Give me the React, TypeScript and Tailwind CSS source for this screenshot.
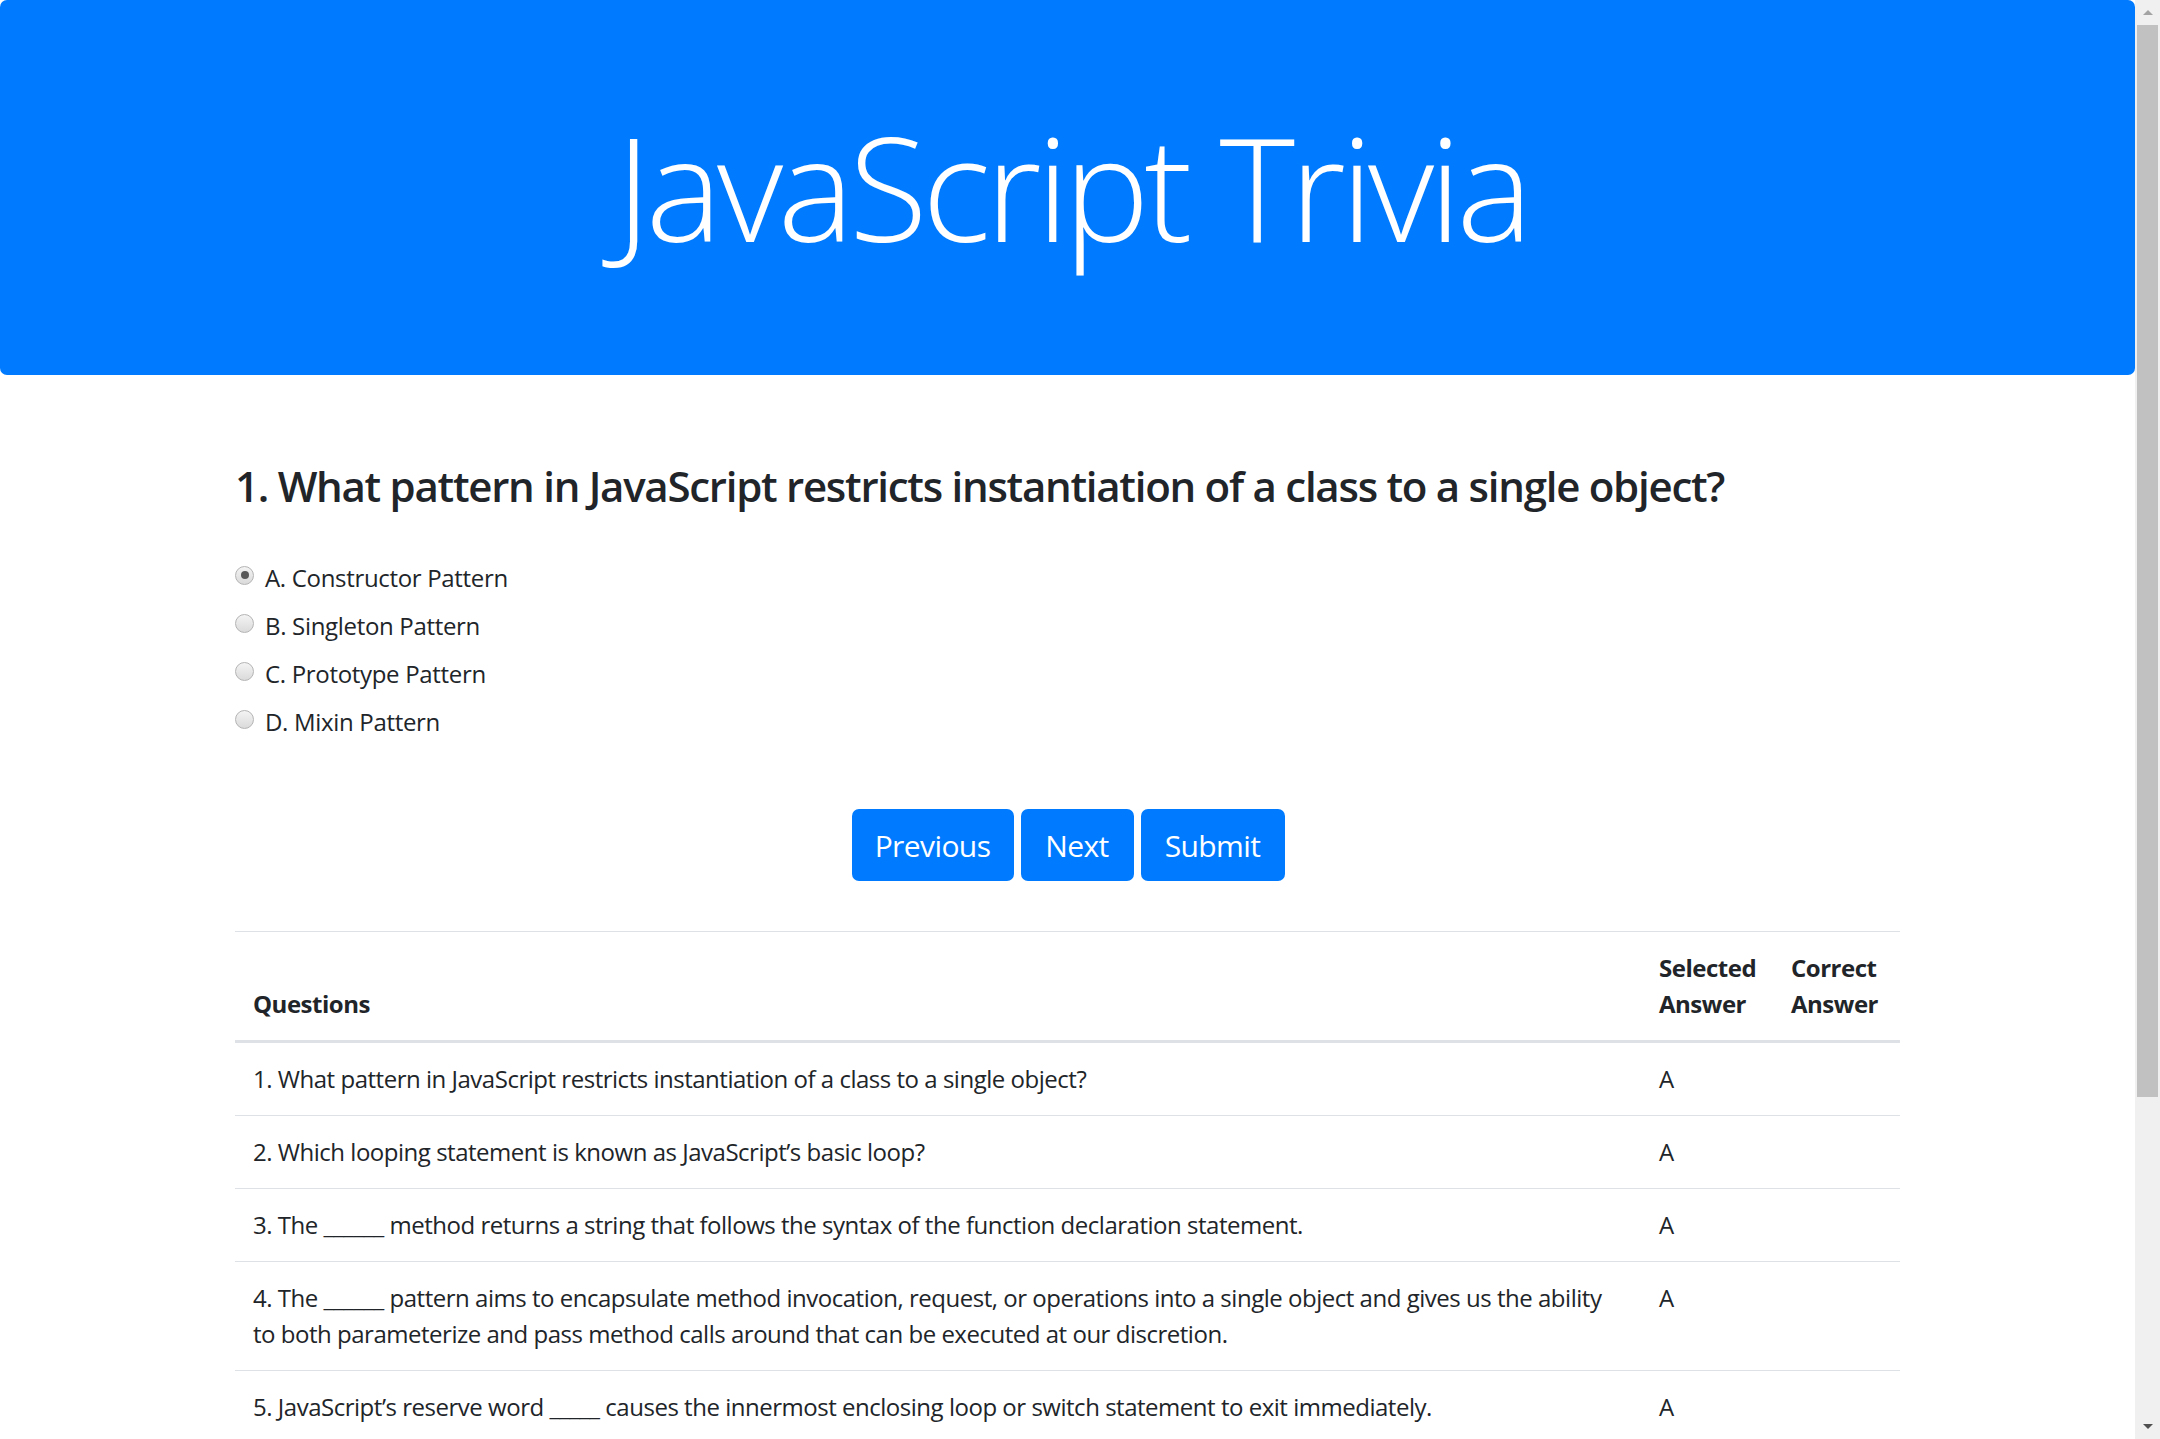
import { useState } from "react";

const font = "font-['Open_Sans',sans-serif]";

const options = [
  "A. Constructor Pattern",
  "B. Singleton Pattern",
  "C. Prototype Pattern",
  "D. Mixin Pattern",
];

const rows = [
  { q: "1. What pattern in JavaScript restricts instantiation of a class to a single object?", sel: "A", ok: "" },
  { q: "2. Which looping statement is known as JavaScript’s basic loop?", sel: "A", ok: "" },
  { q: "3. The ______ method returns a string that follows the syntax of the function declaration statement.", sel: "A", ok: "" },
  {
    q: "4. The ______ pattern aims to encapsulate method invocation, request, or operations into a single object and gives us the ability to both parameterize and pass method calls around that can be executed at our discretion.",
    sel: "A",
    ok: "",
  },
  { q: "5. JavaScript’s reserve word _____ causes the innermost enclosing loop or switch statement to exit immediately.", sel: "A", ok: "" },
];

function Radio({ checked }: { checked: boolean }) {
  return (
    <span className="flex h-[19px] w-[19px] shrink-0 items-center justify-center rounded-full border border-[#b4b4b4] bg-[linear-gradient(#f4f4f4,#dadada)]">
      {checked && <span className="h-[8px] w-[8px] rounded-full bg-[#5a5a5a]" />}
    </span>
  );
}

function Scrollbar() {
  return (
    <div className="flex h-full w-[25px] shrink-0 flex-col bg-[#f0f0f0]">
      <div className="flex h-[25px] items-center justify-center">
        <span className="h-0 w-0 border-x-[5px] border-b-[5px] border-x-transparent border-b-[#a3a3a3]" />
      </div>
      <div className="ml-[2px] mr-[2px] h-[1072px] bg-[#c1c1c1]" />
      <div className="flex-1" />
      <div className="flex h-[25px] items-center justify-center">
        <span className="h-0 w-0 border-x-[5px] border-t-[5px] border-x-transparent border-t-[#505050]" />
      </div>
    </div>
  );
}

export default function App() {
  const [answer, setAnswer] = useState(0);

  return (
    <div className={`flex h-[1439px] w-full overflow-hidden bg-white text-[#212529] ${font}`}>
      <div className="min-w-0 flex-1">
        {/* jumbotron */}
        <div className="h-[375px] rounded-[7px] bg-[#007bff] pt-[100px] text-center">
          <h1 className="pl-[8px] text-[144px] font-light leading-[1.2] tracking-[-0.036em] text-white">JavaScript Trivia</h1>
        </div>

        <div className="mx-auto w-[1665px] pt-[86px]">
          <h3 className="text-[42px] font-semibold leading-[1.2] tracking-[-0.03em]">
            1. What pattern in JavaScript restricts instantiation of a class to a single object?
          </h3>

          <div className="mt-[49px] flex flex-col gap-[12px] tracking-[-0.02em]">
            {options.map((o, i) => (
              <label key={o} className="flex cursor-pointer items-center gap-[11px] text-[24px] leading-[36px]" onClick={() => setAnswer(i)}>
                <span className="-mt-[6px]">
                  <Radio checked={answer === i} />
                </span>
                <span>{o}</span>
              </label>
            ))}
          </div>

          <div className="mt-[69px] flex justify-center gap-[7px] pl-[1px]">
            <button className="h-[72px] w-[162px] rounded-[7px] bg-[#007bff] text-[30px] tracking-[-0.02em] text-white">Previous</button>
            <button className="h-[72px] w-[113px] rounded-[7px] bg-[#007bff] text-[30px] tracking-[-0.02em] text-white">Next</button>
            <button className="h-[72px] w-[144px] rounded-[7px] bg-[#007bff] text-[30px] tracking-[-0.02em] text-white">Submit</button>
          </div>

          {/* results table */}
          <div className="mt-[50px] text-[24px] leading-[36px] tracking-[-0.02em]">
            <div className="grid grid-cols-[1fr_132px_127px] border-t border-b-[3px] border-t-[#dee2e6] border-b-[#dee2e6] font-bold">
              <div className="flex items-end px-[18px] py-[18px]">Questions</div>
              <div className="px-[18px] py-[18px]">Selected Answer</div>
              <div className="px-[18px] py-[18px]">Correct Answer</div>
            </div>
            {rows.map((r, i) => (
              <div key={i} className={`grid grid-cols-[1fr_132px_127px] ${i > 0 ? "border-t border-[#dee2e6]" : ""}`}>
                <div className="px-[18px] py-[18px]">{r.q}</div>
                <div className="px-[18px] py-[18px]">{r.sel}</div>
                <div className="px-[18px] py-[18px]">{r.ok}</div>
              </div>
            ))}
          </div>
        </div>
      </div>
      <Scrollbar />
    </div>
  );
}
